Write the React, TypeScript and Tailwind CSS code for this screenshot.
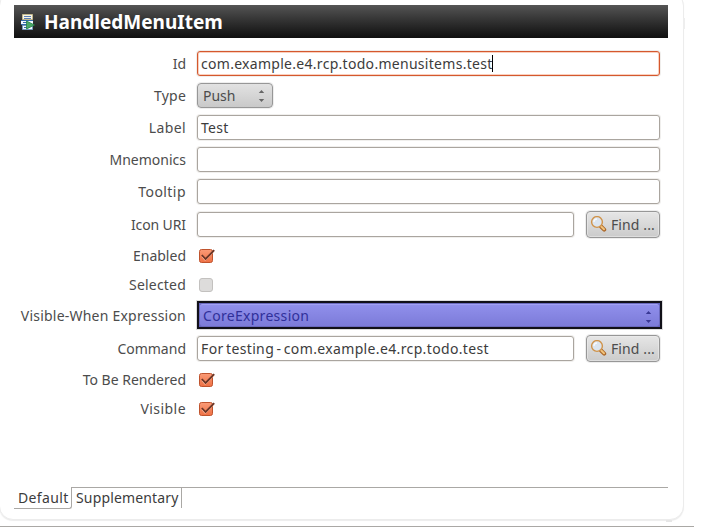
import type { ReactNode } from "react";

function Row({ label, tracking = "", className, children }: { label: string; tracking?: string; className: string; children: ReactNode }) {
  return (
    <div className={`flex items-center ${className}`}>
      <div className={`mr-[11px] w-[186px] shrink-0 whitespace-nowrap text-right leading-5 text-[#4c4c4c] ${tracking}`}>{label}</div>
      {children}
    </div>
  );
}

function Field({ value, short = false, focused = false, tracking = "" }: { value?: string; short?: boolean; focused?: boolean; tracking?: string }) {
  return (
    <div
      className={`flex h-[25px] items-center whitespace-nowrap rounded-[3px] border bg-white pl-[3px] leading-5 text-[#3c3c3c] ${short ? "w-[377px]" : "w-[463px]"} ${
        focused ? "border-[#d4582e] shadow-[inset_0_0_0_1px_#fbd0be,0_0_0_1px_#f0eeec]" : "border-[#aaa59f] shadow-[0_0_0_1px_#f0efed]"
      }`}
    >
      <span className={tracking}>{value}</span>
      {focused && <span className="-ml-px h-[17px] w-px bg-black" />}
    </div>
  );
}

function Arrows({ className }: { className: string }) {
  return (
    <svg viewBox="0 0 7 13" className={`h-[13px] w-[7px] shrink-0 ${className}`} fill="currentColor">
      <path d="M3.5 1 6.2 4H.8zM.8 10h5.4l-2.7 3z" />
    </svg>
  );
}

function Check() {
  return (
    <svg viewBox="0 0 17 16" className="ml-[2px] h-4 w-[17px] shrink-0">
      <defs>
        <linearGradient id="check" x1="0" y1="0" x2="0" y2="1">
          <stop offset="0" stopColor="#fa9b77" />
          <stop offset="1" stopColor="#ee7044" />
        </linearGradient>
      </defs>
      <rect x="0.5" y="1.5" width="13" height="13" rx="2" fill="url(#check)" stroke="#bf532d" />
      <path d="M3 7.2 6.2 11 15 1.8" fill="none" stroke="#fdb99c" strokeWidth="1" transform="translate(0 1.6)" />
      <path d="M2.8 7 6.6 11 15.2 2.2" fill="none" stroke="#693627" strokeWidth="1.8" />
    </svg>
  );
}

function FindButton() {
  return (
    <div className="ml-3 flex h-[27px] w-[74px] items-center whitespace-nowrap rounded-[4px] border border-[#979797] bg-linear-to-b from-[#e6e6e6] to-[#cbcbcb] pl-[3px] leading-5 text-[#4c4c4c] shadow-[inset_0_0_0_1px_#eeeeee88,0_0_0_1px_#eeeeee]">
      <svg viewBox="0 0 17 17" className="h-[17px] w-[17px] shrink-0">
        <path d="m11 10.5 3.2 3.2" stroke="#aa672a" strokeWidth="4" strokeLinecap="round" />
        <path d="m11 10.2 3 3" stroke="#f2c47c" strokeWidth="2" strokeLinecap="round" />
        <circle cx="7" cy="6" r="5.4" fill="#dce5ef" stroke="#d0934a" strokeWidth="1.4" />
        <path d="M4 6a3 3 0 0 1 3-3" stroke="#f7faff" strokeWidth="1.3" fill="none" />
      </svg>
      <span className="ml-[4px] tracking-[0.1px]">Find ...</span>
    </div>
  );
}

function ItemIcon() {
  return (
    <svg viewBox="0 0 14 16" className="h-4 w-[14px] shrink-0">
      <path d="M1.5.5h10v5h-10z" fill="#f8f5e5" stroke="#c4b98d" />
      <path d="M3 2.5h7M3 4.5h7" stroke="#5b7fb5" />
      <path d="M0 6h12v5H0z" fill="#f4f8ff" />
      <path d="M0 6.5h12M0 10.5h7M2 8.5h5" stroke="#346aaa" />
      <path d="M1.5 11.5h10v4h-10z" fill="#f4f8ff" stroke="#7798bd" />
      <path d="M3 13.5h5" stroke="#346aaa" />
      <path d="M5.5 7 13.5 11 5.5 15z" fill="#4aa866" stroke="#278047" strokeWidth=".8" />
    </svg>
  );
}

export default function App() {
  return (
    <div className="h-[529px] w-[704px] overflow-hidden bg-white font-['Noto_Sans','Open_Sans',sans-serif] text-[14px]">
      <div className="relative -ml-px -mt-2 h-[528px] w-[685px] rounded-[14px] border border-[#ececec] bg-white pl-[14px] pt-[12px] shadow-[0_1px_1px_#ededed]">
        <span className="absolute -right-[2px] top-[25px] h-[11px] w-[2px] bg-[#eeeeee]" />
        <span className="absolute -bottom-[3px] right-[11px] h-[2px] w-[6px] bg-[#e6e6e6]" />
        <header className="flex h-[33px] w-[654px] items-center bg-linear-to-b from-[#555555] to-[#101010] pl-[7px]">
          <ItemIcon />
          <h1 className="ml-[9px] text-[19px] font-bold leading-6 text-white">HandledMenuItem</h1>
        </header>
        <main className="-ml-[14px] mt-[13px] h-[436px]">
          <Row label="Id" className="h-[25px]">
            <Field value="com.example.e4.rcp.todo.menusitems.test" focused tracking="tracking-[0.29px]" />
          </Row>
          <Row label="Type" className="mt-[7px] h-[25px]" tracking="tracking-[0.2px]">
            <div className="flex h-[25px] w-[76px] items-center justify-between rounded-[4px] border border-[#979797] bg-linear-to-b from-[#e2e2e2] to-[#c9c9c9] pl-[5px] pr-[7px] leading-5 text-[#4c4c4c] shadow-[0_0_0_1px_#eeeeee]">
              Push
              <Arrows className="text-[#666666]" />
            </div>
          </Row>
          <Row label="Label" className="mt-[7px] h-[25px]" tracking="tracking-[0.4px]">
            <Field value="Test" tracking="tracking-[0.3px]" />
          </Row>
          <Row label="Mnemonics" className="mt-[7px] h-[25px]">
            <Field />
          </Row>
          <Row label="Tooltip" className="mt-[7px] h-[25px]" tracking="tracking-[0.45px]">
            <Field />
          </Row>
          <Row label="Icon URI" className="mt-[7px] h-[27px]" tracking="tracking-[-0.1px]">
            <Field short />
            <FindButton />
          </Row>
          <Row label="Enabled" className="mt-[11px] h-[14px]">
            <Check />
          </Row>
          <Row label="Selected" className="mt-[15px] h-[14px]" tracking="tracking-[0.2px]">
            <div className="ml-[2px] h-[14px] w-[14px] rounded-[3px] border border-[#c3c1bf] bg-[#dddcdb]" />
          </Row>
          <Row label="Visible-When Expression" className="mt-[9px] h-[28px] [&>div:first-child]:pt-[2px]" tracking="tracking-[0.22px]">
            <div className="h-[28px] w-[465px] border-2 border-[#111018] bg-[#6060c0] shadow-[0_0_0_1px_#99999955]">
              <div className="flex h-full items-center justify-between rounded-[3px] border border-[#6a69bd] bg-linear-to-b from-[#9190ec] to-[#7c7bd9] pl-[3px] pr-[7px] pt-[2px] leading-5 text-[#30309a] shadow-[inset_0_1px_0_#a2a1f4]">
                <span className="tracking-[0.3px]">CoreExpression</span>
                <Arrows className="text-[#393894]" />
              </div>
            </div>
          </Row>
          <Row label="Command" className="mt-[6px] h-[27px]">
            <Field value="For testing - com.example.e4.rcp.todo.test" short tracking="tracking-[0.36px] [word-spacing:-1.6px]" />
            <FindButton />
          </Row>
          <Row label="To Be Rendered" className="mt-[11px] h-[14px]">
            <Check />
          </Row>
          <Row label="Visible" className="mt-[15px] h-[14px]" tracking="tracking-[0.45px]">
            <Check />
          </Row>
        </main>
        <nav className="flex h-[22px] w-[654px] leading-5 text-[#3c3c3c]">
          <div className="w-[58px] rounded-br-[3px] border-b border-r border-[#aaa8a5] pl-1 pt-px tracking-[0.35px]">Default</div>
          <div className="h-[21px] w-[110px] border-r border-t border-[#aaa8a5] pl-1 tracking-[0.15px]">Supplementary</div>
          <div className="h-px flex-1 bg-[#aaa8a5]" />
        </nav>
      </div>
      <div className="mt-[6px] h-px w-[694px] bg-[#aaa8a5]" />
    </div>
  );
}
